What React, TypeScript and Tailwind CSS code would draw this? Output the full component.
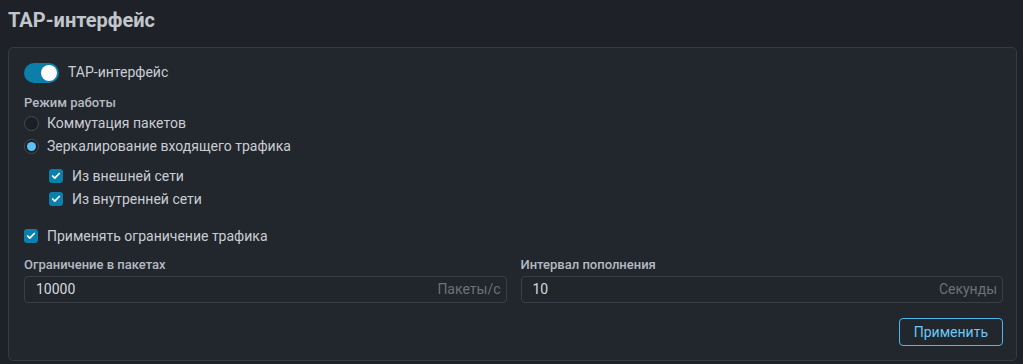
import { useState } from "react";

const font = { fontFamily: "Roboto, 'Noto Sans', sans-serif" };

function Check({ checked, onChange }: { checked: boolean; onChange: () => void }) {
  return (
    <button
      onClick={onChange}
      className={`flex items-center justify-center w-[14px] h-[14px] rounded-[3px] ${
        checked ? "bg-[#0b80ac]" : "border border-[#4a4f57]"
      }`}
    >
      {checked && (
        <svg width="10" height="10" viewBox="0 0 24 24" fill="none" stroke="white" strokeWidth="4" strokeLinecap="round" strokeLinejoin="round">
          <polyline points="20 6 9 17 4 12" />
        </svg>
      )}
    </button>
  );
}

function Radio({ checked, onChange }: { checked: boolean; onChange: () => void }) {
  return (
    <button
      onClick={onChange}
      className="flex items-center justify-center w-[15px] h-[15px] rounded-full border border-[#474b53] bg-[#1c1f25]"
    >
      {checked && <span className="w-[9px] h-[9px] rounded-full bg-[#5cc2f5]" />}
    </button>
  );
}

function Field({ label, value, unit }: { label: string; value: string; unit: string }) {
  return (
    <div className="flex flex-col">
      <div className="text-[13px] font-medium text-[#b5bac2] leading-[15px] mb-[4px]">{label}</div>
      <div className="flex items-center h-[27px] rounded-[4px] border border-[#3a3e46] bg-[#21252c] pl-[11px] pr-[5px]">
        <span className="flex-1 text-[14px] text-[#d5d9df]">{value}</span>
        <span className="text-[14px] text-[#6c7179]">{unit}</span>
      </div>
    </div>
  );
}

export default function App() {
  const [enabled, setEnabled] = useState(true);
  const [mode, setMode] = useState("mirror");
  const [ext, setExt] = useState(true);
  const [int, setInt] = useState(true);
  const [limit, setLimit] = useState(true);

  return (
    <div className="min-h-[364px] bg-[#1e2127] pl-2 pr-[6px] pt-[7px] pb-1 text-[#c9cdd3]" style={font}>
      <h1 className="text-[20px] font-bold leading-[26px] text-[#c1c6cd] mb-[14px]">TAP-интерфейс</h1>

      <div className="rounded-[5px] border border-[#363a41] bg-[#22262d] pl-[15px] pr-[13px] pt-[14px] pb-[14px]">
        <div className="flex items-center gap-[9px]">
          <button
            onClick={() => setEnabled((v) => !v)}
            className={`flex items-center w-[35px] h-[20px] rounded-full px-[2px] ${
              enabled ? "bg-[#0b7fa9] justify-end" : "bg-[#4a4f57] justify-start"
            }`}
          >
            <span className="w-[16px] h-[16px] rounded-full bg-white" />
          </button>
          <span className="text-[14px] text-[#c9cdd3]">TAP-интерфейс</span>
        </div>

        <div className="mt-[12px] text-[13px] font-medium leading-[15px] text-[#b5bac2]">Режим работы</div>

        <div className="mt-[6px] flex flex-col gap-[8px]">
          <div className="flex items-center gap-[8px] h-[15px]">
            <Radio checked={mode === "switch"} onChange={() => setMode("switch")} />
            <span className="text-[14px]">Коммутация пакетов</span>
          </div>
          <div className="flex items-center gap-[8px] h-[15px]">
            <Radio checked={mode === "mirror"} onChange={() => setMode("mirror")} />
            <span className="text-[14px]">Зеркалирование входящего трафика</span>
          </div>
        </div>

        <div className="mt-[15px] ml-[25px] flex flex-col gap-[9px]">
          <div className="flex items-center gap-[9px] h-[14px]">
            <Check checked={ext} onChange={() => setExt((v) => !v)} />
            <span className="text-[14px]">Из внешней сети</span>
          </div>
          <div className="flex items-center gap-[9px] h-[14px]">
            <Check checked={int} onChange={() => setInt((v) => !v)} />
            <span className="text-[14px]">Из внутренней сети</span>
          </div>
        </div>

        <div className="mt-[23px] flex items-center gap-[9px] h-[14px]">
          <Check checked={limit} onChange={() => setLimit((v) => !v)} />
          <span className="text-[14px]">Применять ограничение трафика</span>
        </div>

        <div className="mt-[14px] grid grid-cols-2 gap-[14px]">
          <Field label="Ограничение в пакетах" value="10000" unit="Пакеты/с" />
          <Field label="Интервал пополнения" value="10" unit="Секунды" />
        </div>

        <div className="mt-[15px] flex justify-end">
          <button className="h-[28px] px-[14px] rounded-[4px] border border-[#4fb6ea] text-[14px] text-[#6cc8f5]">
            Применить
          </button>
        </div>
      </div>
    </div>
  );
}
